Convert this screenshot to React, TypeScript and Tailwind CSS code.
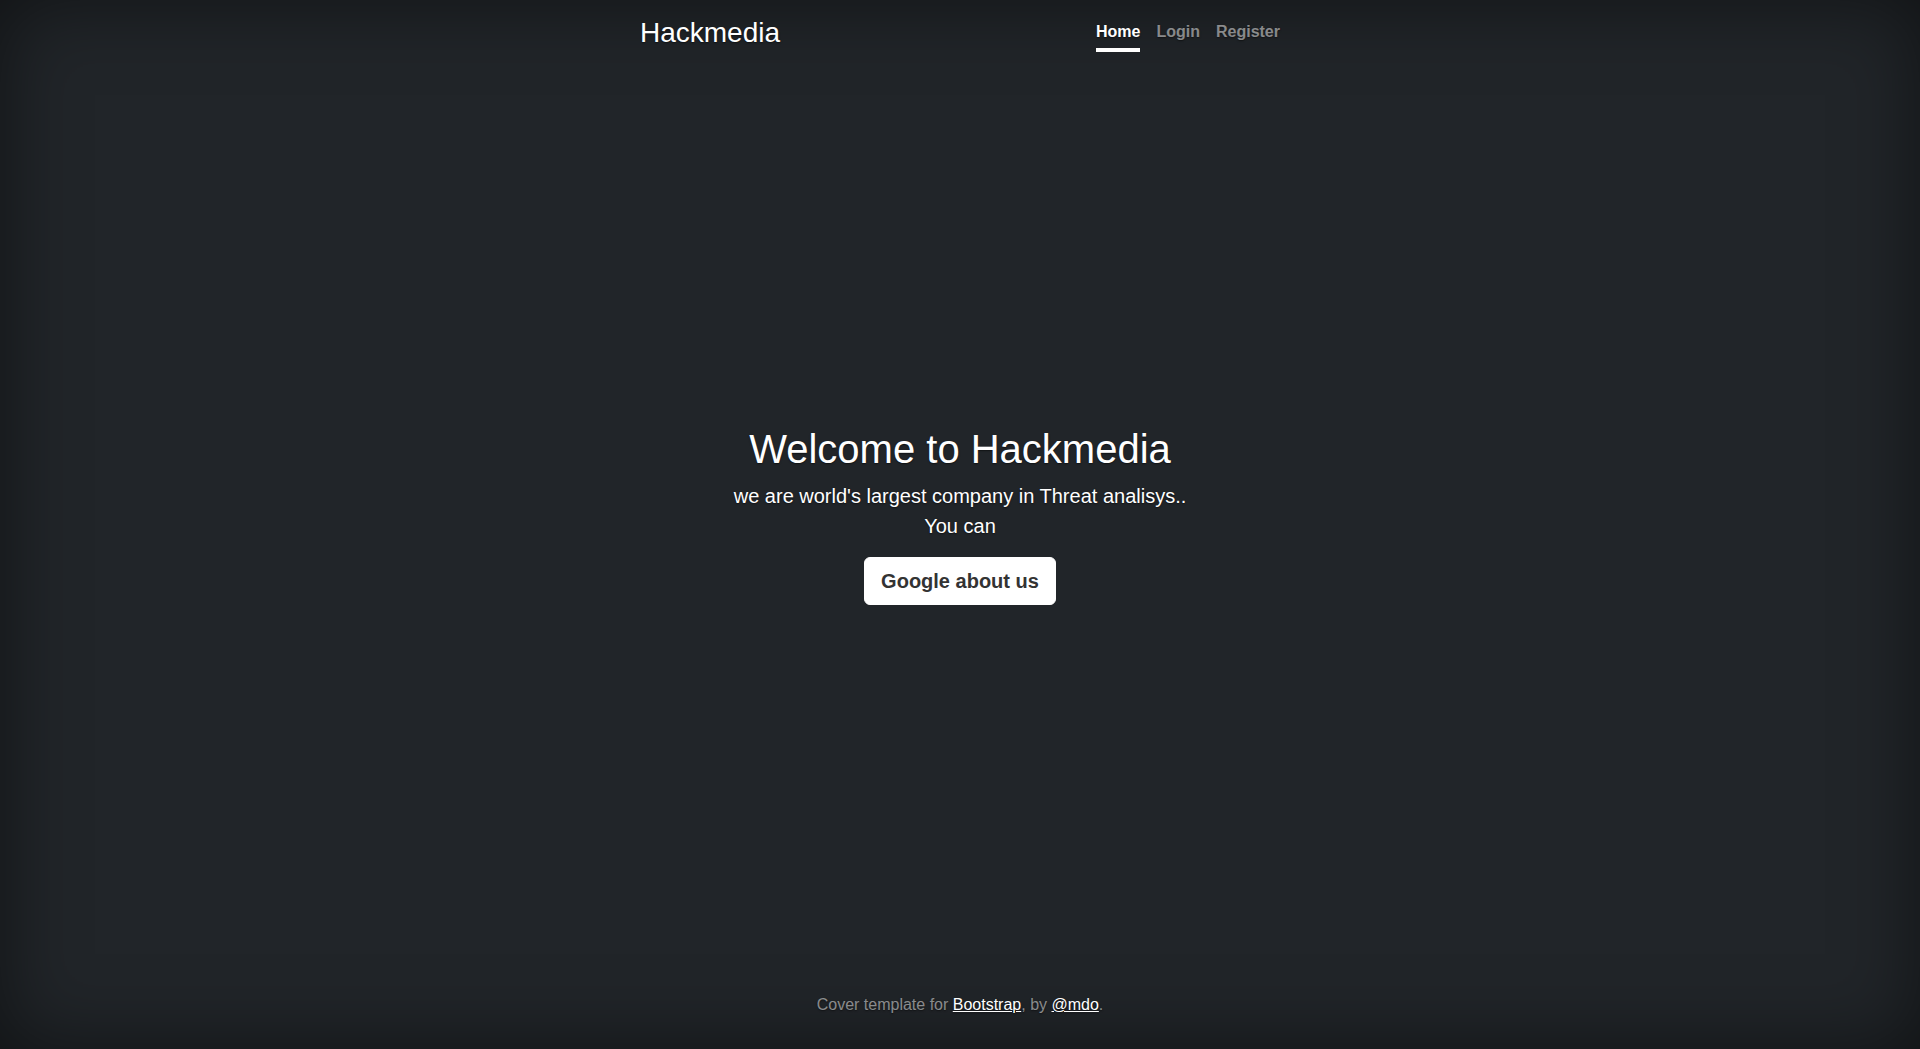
const shadow = "[text-shadow:0_0.05rem_0.1rem_rgba(0,0,0,0.5)]";

function Masthead() {
  const links = [
    { label: "Home", active: true },
    { label: "Login", active: false },
    { label: "Register", active: false },
  ];

  return (
    <header className="mb-auto flex items-start justify-between">
      <h3 className="text-[28px] leading-[1.2] font-normal">Hackmedia</h3>
      <nav className="flex gap-4">
        {links.map((link) => (
          <a
            key={link.label}
            href="#"
            className={
              link.active
                ? "border-b-4 border-white py-1 text-base leading-6 font-bold text-white"
                : "border-b-4 border-transparent py-1 text-base leading-6 font-bold text-white/50"
            }
          >
            {link.label}
          </a>
        ))}
      </nav>
    </header>
  );
}

export default function App() {
  return (
    <div
      className={`flex h-screen w-full bg-[#212529] text-center text-white shadow-[inset_0_0_5rem_rgba(0,0,0,0.5)] ${shadow}`}
      style={{ fontFamily: '"Liberation Sans", Arial, sans-serif' }}
    >
      <div className="mx-auto flex h-full w-full max-w-[672px] flex-col p-4 text-left">
        <Masthead />

        <main className="px-4 text-center">
          <h1 className="mb-2 text-[40px] leading-[1.2] font-normal">Welcome to Hackmedia</h1>
          <p className="mb-4 text-[20px] leading-[1.5]">
            we are world's largest company in Threat analisys..
            <br />
            You can
          </p>
          <p className="mb-4">
            <a
              href="#"
              className="inline-block rounded-md border border-white bg-white px-4 py-2 text-[20px] leading-[1.5] font-bold text-[#333] [text-shadow:none]"
            >
              Google about us
            </a>
          </p>
        </main>

        <footer className="mt-auto text-center text-white/50">
          <p className="mb-4 text-base leading-6">
            Cover template for{" "}
            <a href="#" className="text-white underline">
              Bootstrap
            </a>
            , by{" "}
            <a href="#" className="text-white underline">
              @mdo
            </a>
            .
          </p>
        </footer>
      </div>
    </div>
  );
}
